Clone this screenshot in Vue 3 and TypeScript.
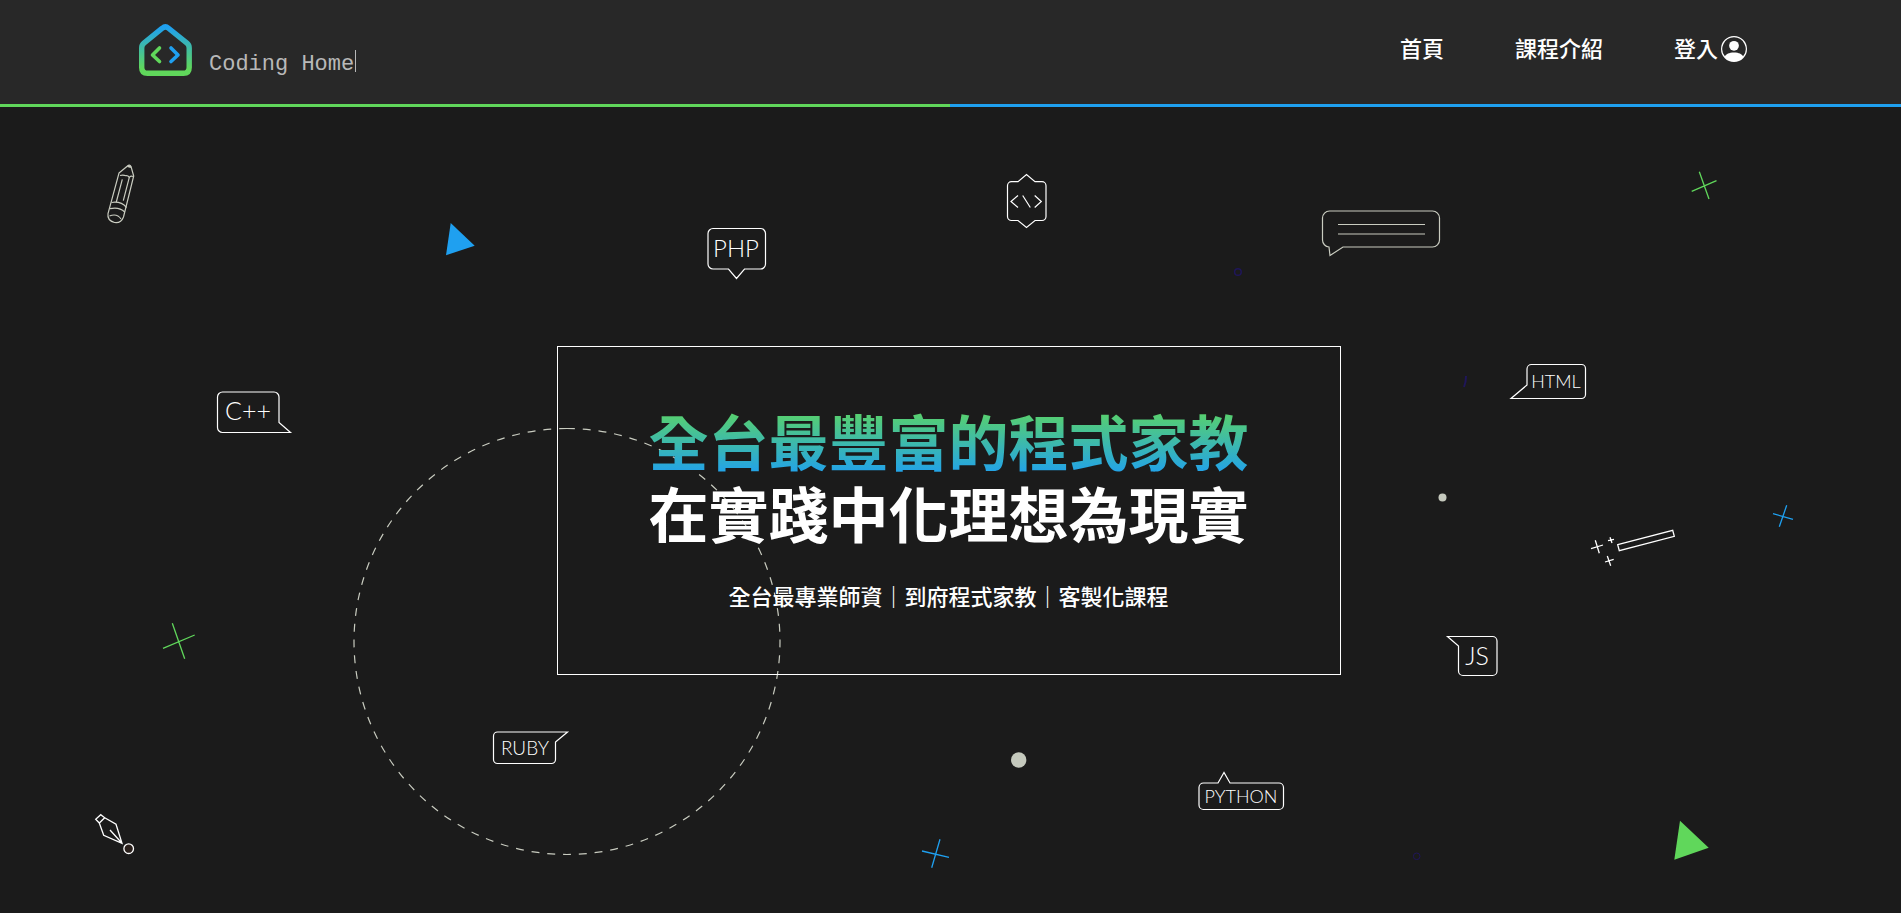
<script setup lang="ts">
interface NavItem {
  label: string
  href: string
  account?: boolean
}

interface Label {
  text: string
  x: number
  y: number
  size: number
  outline: string
}

const navItems: NavItem[] = [
  { label: '首頁', href: '#home' },
  { label: '課程介紹', href: '#courses' },
  { label: '登入', href: '#login', account: true },
]

// Speech bubbles with a programming language name; x and y are the centre of the text's baseline.
const labels: Label[] = [
  { text: 'PHP', x: 736, y: 257, size: 24, outline: 'M713 228.500H760.500a5 5 0 0 1 5 5V264a5 5 0 0 1-5 5H744.500L736.500 278.500L728.500 269H713a5 5 0 0 1-5-5V233.500a5 5 0 0 1 5-5Z' },
  { text: 'C++', x: 248, y: 420, size: 25, outline: 'M222.500 392H274a5 5 0 0 1 5 5V422.500L290.500 432.500H222.500a5 5 0 0 1-5-5V397a5 5 0 0 1 5-5Z' },
  { text: 'HTML', x: 1556, y: 388, size: 18, outline: 'M1531.500 364.500H1581.500a4 4 0 0 1 4 4V394.500a4 4 0 0 1-4 4H1511L1527 385V369a4.500 4.500 0 0 1 4.500-4.500Z' },
  { text: 'JS', x: 1477, y: 665, size: 25, outline: 'M1447.500 636.500H1492.500a4.500 4.500 0 0 1 4.500 4.500V671a4.500 4.500 0 0 1-4.500 4.500H1463a4.500 4.500 0 0 1-4.500-4.500V646Z' },
  { text: 'RUBY', x: 525, y: 755, size: 19, outline: 'M497.500 732H567.500L555.500 742V759.500a4 4 0 0 1-4 4H497.500a4 4 0 0 1-4-4V736a4 4 0 0 1 4-4Z' },
  { text: 'PYTHON', x: 1241, y: 803, size: 18, outline: 'M1203.500 783H1218L1224 772.500L1230 783H1279a4.500 4.500 0 0 1 4.500 4.500V805a4.500 4.500 0 0 1-4.500 4.500H1203.500a4.500 4.500 0 0 1-4.500-4.500V787.500a4.500 4.500 0 0 1 4.500-4.500Z' },
]
</script>

<template>
  <div class="page">
    <header class="header">
      <a class="brand" href="#home" aria-label="Coding Home">
        <svg class="logo" viewBox="0 0 53 52" aria-hidden="true">
          <defs>
            <linearGradient id="house" x1="0" y1="0" x2="0" y2="1">
              <stop offset="0" stop-color="#1fa0f0" />
              <stop offset="0.9" stop-color="#60d75b" />
            </linearGradient>
          </defs>
          <path
            d="M23.300 4.200Q26.400 1.600 29.500 4.200L48 19.200Q50.200 21 50.200 24V43.500Q50.200 49.300 44.500 49.300H8.500Q2.700 49.300 2.700 43.500V24Q2.700 21 4.900 19.200Z"
            fill="none" stroke="url(#house)" stroke-width="5.400" stroke-linejoin="round"
          />
          <path d="M20.500 24L13.500 31L20.500 37.500" fill="none" stroke="#60d75b" stroke-width="3.600" stroke-linecap="round" stroke-linejoin="round" />
          <path d="M32 24L39 31L32 37.500" fill="none" stroke="#1fa0f0" stroke-width="3.600" stroke-linecap="round" stroke-linejoin="round" />
        </svg>
        <span class="brand-name">Coding Home</span>
      </a>
      <nav class="nav">
        <a v-for="item in navItems" :key="item.label" class="nav-link" :href="item.href">
          {{ item.label }}
          <svg v-if="item.account" class="account" viewBox="0 0 16 16" fill="currentColor" aria-hidden="true">
            <path d="M11 6a3 3 0 1 1-6 0 3 3 0 0 1 6 0" />
            <path fill-rule="evenodd" d="M0 8a8 8 0 1 1 16 0A8 8 0 0 1 0 8m8-7.200a7.200 7.200 0 0 0-5.600 11.700C3.242 11.226 4.805 10.200 8 10.200s4.757 1.025 5.600 2.300A7.200 7.200 0 0 0 8 0.800" />
          </svg>
        </a>
      </nav>
    </header>
    <div class="rule"></div>

    <main class="hero">
      <svg class="scene" viewBox="0 107 1901 806" preserveAspectRatio="xMidYMid meet" aria-hidden="true">
        <!-- orbit -->
        <path class="ash" d="M567 428.500a213 213 0 1 1 0 426a213 213 0 1 1 0-426" pathLength="1352" stroke-dasharray="8 8" />

        <!-- pencil -->
        <g class="ash">
          <path d="M119 173L127.500 166Q129.500 164 131 166.500L133.700 176L123.500 217Q121 223.500 114.500 222.500Q107 220.500 108 213.500Z" />
          <path d="M127.500 166L131 167" stroke-width="2" />
          <path d="M120 175.500Q123 174.500 126 175.700Q128 175.500 129.300 177.300Q131 175.500 133 176.500" />
          <path d="M122.300 179.300L116.300 202M129.300 177.300L123.300 200.700" />
          <path d="M111.500 202.500Q121 201 126.500 207.500M110 208.700Q119 206.500 124.700 212M109.500 216Q117 213 121 219" />
        </g>

        <!-- chat bubble -->
        <path class="ash" d="M1329.500 211H1432.500a7 7 0 0 1 7 7V240a7 7 0 0 1-7 7H1343L1330 255.500L1329 247a7 7 0 0 1-6.500-7V218a7 7 0 0 1 7-7ZM1338 224.500H1425M1338 234H1425" />

        <!-- code bubble -->
        <path class="line" d="M1011.500 181.700H1018L1026.500 174.500L1035 181.700H1042a4 4 0 0 1 4 4V216.500a4 4 0 0 1-4 4H1035L1026.500 227.500L1018 220.500H1011.500a4 4 0 0 1-4-4V185.700a4 4 0 0 1 4-4ZM1018 195.500L1011 201.500L1018 207.500M1022.700 195.500L1030.300 207.500M1034.700 195.500L1041.300 201.500L1034.700 207.500" />

        <!-- language bubbles -->
        <g v-for="label in labels" :key="label.text">
          <path class="line" :d="label.outline" />
          <text class="label" :x="label.x" :y="label.y" :font-size="label.size">{{ label.text }}</text>
        </g>

        <!-- magic wand -->
        <path class="line wand" d="M1617.700 544.700L1672.700 530.300L1674.300 536.300L1619.300 550.700ZM1595.300 540.300L1599.300 553.300M1591 548.700L1603 545M1610 537.300L1612 543M1608 540.700L1614 539.300M1607.300 556L1610.700 565.700M1605 562L1613.700 559.300" />

        <!-- pen nib -->
        <g class="line wand">
          <path d="M100.700 814.700L95.700 819.300L99.300 823L104.700 817.700ZM104.700 817.700L116 824.300L122 843.300L103.700 835.300L99.300 823M110 830L122 843.300" />
          <circle cx="128.700" cy="848.700" r="4.800" fill="#2a201c" />
        </g>

        <!-- crosses -->
        <path class="green-line" d="M1699.300 171.700L1709 199M1691.700 191.300L1716.500 180.700M172.300 623.300L184.700 658.700M163 648.300L194.700 635" />
        <path class="blue-line" d="M1786.700 505.300L1779.300 526.700M1773 513.700L1793 519.300M940 839.300L931.700 867.700M922 851L949 857.300" />

        <!-- triangles -->
        <path fill="#1fa0f0" d="M450.700 223L474.700 245.700L446 255.300Z" />
        <path fill="#60d75b" d="M1680 820.700L1708.700 847.700L1674.300 859.700Z" />

        <!-- dots, rings and the dark slash -->
        <circle cx="1442.500" cy="497.500" r="4" fill="#c5c9bd" />
        <circle cx="1018.700" cy="760" r="7.700" fill="#c5c9bd" />
        <g fill="none" stroke="#1f1659">
          <circle cx="1237.900" cy="272" r="3.300" stroke-width="1.500" />
          <circle cx="1416.700" cy="856.300" r="3.300" />
          <path d="M1466 376Q1466 382 1464 387" stroke-width="2" />
        </g>
      </svg>

      <section class="card">
        <h1 class="title">
          <span class="title-top">全台最豐富的程式家教</span>
          <span>在實踐中化理想為現實</span>
        </h1>
        <p class="subtitle">全台最專業師資｜到府程式家教｜客製化課程</p>
      </section>
    </main>
  </div>
</template>

<style>
body {
  background: #1b1b1b;
}
</style>

<style scoped>
.page {
  display: flex;
  flex-direction: column;
  min-height: 100vh;
  background: #1b1b1b;
  color: #fff;
  font-family: "Noto Sans CJK TC", sans-serif;
}

.header {
  display: flex;
  align-items: flex-start;
  justify-content: space-between;
  box-sizing: border-box;
  min-height: 104px;
  padding: 24px 154px 24px 139px;
  background: #282828;
}

.brand {
  display: flex;
  gap: 17px;
  color: #b8b8b8;
  text-decoration: none;
}

.logo {
  width: 53px;
  height: 52px;
}

.brand-name {
  align-self: flex-end;
  height: 22px;
  margin-bottom: 4px;
  padding-right: 1px;
  border-right: 1px solid #b8b8b8;
  font: 22px/30px "Liberation Mono", monospace;
}

.nav {
  display: flex;
  gap: 71px;
  padding-top: 8px;
}

.nav-link {
  display: flex;
  align-items: flex-end;
  gap: 3px;
  color: #fff;
  font-size: 22px;
  font-weight: 500;
  line-height: 30px;
  text-decoration: none;
}

.account {
  width: 26px;
  height: 26px;
}

.rule {
  height: 3px;
  background: linear-gradient(to right, #60d75b 50%, #1fa0f0 50%);
}

.hero {
  position: relative;
  display: flex;
  flex: 1;
  align-items: center;
  justify-content: center;
  padding-right: 4px;
  overflow: hidden;
}

.scene {
  position: absolute;
  inset: 0;
  width: 100%;
  height: 100%;
}

.ash,
.line {
  fill: none;
  stroke: #fff;
  stroke-width: 1.2;
}

.ash {
  stroke: #c9ccc0;
}

.wand {
  stroke-width: 1.3;
}

.green-line {
  stroke: #60d75b;
  stroke-width: 1.3;
}

.blue-line {
  stroke: #1fa0f0;
  stroke-width: 1.3;
}

.label {
  fill: #fff;
  font-family: Lato, sans-serif;
  font-weight: 300;
  text-anchor: middle;
}

.card {
  position: relative;
  padding: 57px 91px 64px;
  border: 1px solid #fff;
  text-align: center;
}

.title {
  display: flex;
  flex-direction: column;
  margin: 0;
  font-size: 60px;
  font-weight: 700;
  line-height: 72px;
}

.title-top {
  background: linear-gradient(#60d75b, #1fa0f0);
  background-clip: text;
  -webkit-background-clip: text;
  color: transparent;
}

.subtitle {
  margin: 32px 0 0;
  font-size: 22px;
  font-weight: 500;
  line-height: 30px;
}
</style>
